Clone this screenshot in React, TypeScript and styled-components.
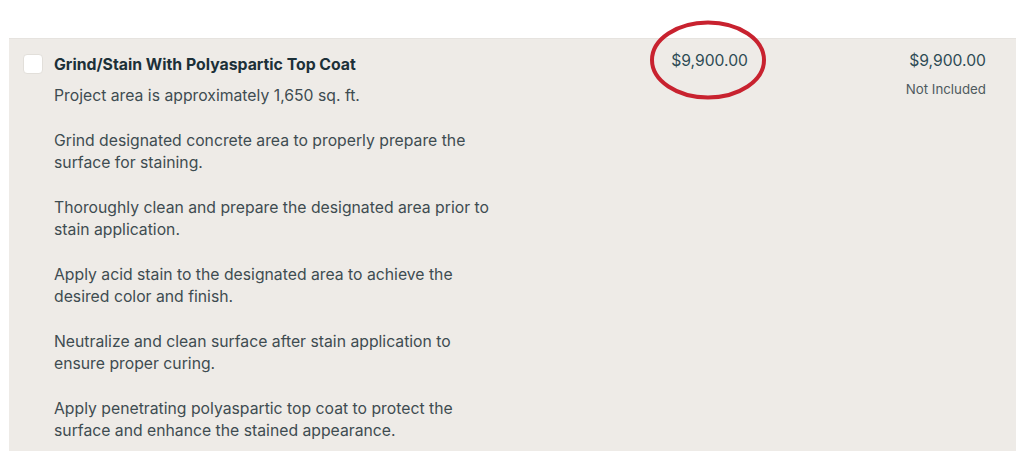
import styled, { createGlobalStyle } from 'styled-components';

const GlobalStyle = createGlobalStyle`
  html, body {
    margin: 0;
    padding: 0;
    background: #ffffff;
    font-family: Inter, "Noto Sans", sans-serif;
    -webkit-font-smoothing: antialiased;
  }
`;

const Page = styled.div`
  position: relative;
  padding: 38px 8px 0 9px;
  height: 451px;
  box-sizing: border-box;
  overflow: hidden;
`;

const LineItem = styled.div`
  display: grid;
  grid-template-columns: 1fr 100px 238px;
  background: #eeebe7;
  border-top: 1px solid #e6e3df;
  padding: 11px 30px 24px 14px;
`;

const ItemMain = styled.div`
  display: flex;
  align-items: flex-start;
  gap: 11px;
`;

const Checkbox = styled.span`
  flex: none;
  width: 20px;
  height: 20px;
  margin-top: 4px;
  box-sizing: border-box;
  background: #ffffff;
  border: 1px solid #e2dfda;
  border-radius: 4px;
`;

const Body = styled.div`
  display: flex;
  flex-direction: column;
  gap: 23px;
  max-width: 445px;
`;

const Title = styled.h3`
  margin: 4px 0 -14px;
  font-size: 15.8px;
  line-height: 22px;
  font-weight: 700;
  color: #1c3038;
`;

const Paragraph = styled.p`
  margin: 0;
  font-size: 15.75px;
  line-height: 22px;
  color: #3e4c51;
`;

const PriceCell = styled.div`
  text-align: right;
  display: flex;
  flex-direction: column;
  align-items: flex-end;
  gap: 8px;
`;

const Price = styled.span`
  font-size: 15.7px;
  line-height: 22px;
  color: #2e4b55;
`;

const Status = styled.span`
  font-size: 13.3px;
  line-height: 18px;
  color: #4f5a5e;
`;

const Annotation = styled.svg`
  position: absolute;
  left: 648px;
  top: 19px;
  pointer-events: none;
`;

const paragraphs = [
  'Project area is approximately 1,650 sq. ft.',
  'Grind designated concrete area to properly prepare the surface for staining.',
  'Thoroughly clean and prepare the designated area prior to stain application.',
  'Apply acid stain to the designated area to achieve the desired color and finish.',
  'Neutralize and clean surface after stain application to ensure proper curing.',
  'Apply penetrating polyaspartic top coat to protect the surface and enhance the stained appearance.',
];

export default function App() {
  return (
    <>
      <GlobalStyle />
      <Page>
        <LineItem>
          <ItemMain>
            <Checkbox />
            <Body>
              <Title>Grind/Stain With Polyaspartic Top Coat</Title>
              {paragraphs.map((p) => (
                <Paragraph key={p}>{p}</Paragraph>
              ))}
            </Body>
          </ItemMain>
          <PriceCell>
            <Price>$9,900.00</Price>
          </PriceCell>
          <PriceCell>
            <Price>$9,900.00</Price>
            <Status>Not Included</Status>
          </PriceCell>
        </LineItem>
        <Annotation width="122" height="84" viewBox="0 0 122 84">
          <ellipse cx="60" cy="41" rx="56" ry="37.5" fill="none" stroke="#c8222f" strokeWidth="4" />
        </Annotation>
      </Page>
    </>
  );
}
